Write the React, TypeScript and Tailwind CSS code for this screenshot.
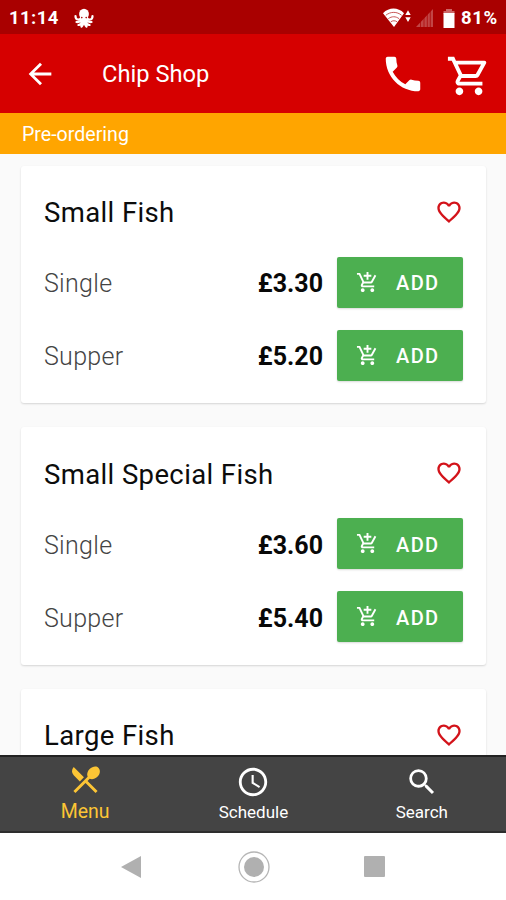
import {
  MdAccessTime,
  MdAddShoppingCart,
  MdArrowBack,
  MdFavoriteBorder,
  MdOutlineShoppingCart,
  MdPhone,
  MdRestaurantMenu,
  MdSearch,
} from "react-icons/md";

const items = [
  {
    name: "Small Fish",
    options: [
      { label: "Single", price: "£3.30" },
      { label: "Supper", price: "£5.20" },
    ],
  },
  {
    name: "Small Special Fish",
    options: [
      { label: "Single", price: "£3.60" },
      { label: "Supper", price: "£5.40" },
    ],
  },
  { name: "Large Fish", options: [] },
];

function Octopus() {
  return (
    <svg viewBox="0 0 20 20" className="ml-[14px] h-[20px] w-[20px]" fill="none">
      <path
        d="M7 10 Q6 12 3.5 11.5 Q1.5 11 1.5 8 M7.5 12 Q6 14.5 2.5 14 M8.5 13 Q8 16.5 4.5 17 M9.5 13 Q9.5 17 7.5 18.5 M13 10 Q14 12 16.5 11.5 Q18.5 11 18.5 8 M12.5 12 Q14 14.5 17.5 14 M11.5 13 Q12 16.5 15.5 17 M10.5 13 Q10.5 17 12.5 18.5"
        stroke="#fff"
        strokeWidth="2.2"
        strokeLinecap="round"
      />
      <ellipse cx="10" cy="6" rx="4.9" ry="5.3" fill="#fff" />
      <path d="M6.3 8h7.4l-.4 7.5H6.7z" fill="#fff" />
      <circle cx="7.8" cy="9.6" r="0.8" fill="#a90000" />
      <circle cx="12.2" cy="9.6" r="0.8" fill="#a90000" />
    </svg>
  );
}

function StatusBar() {
  return (
    <div className="flex h-[34px] items-center bg-[#a90000] pt-[2px] pr-[7px] pl-[9px] text-[18.5px] font-bold text-white">
      <span className="mt-px w-[51px] whitespace-nowrap tracking-[0.4px]">11:14</span>
      <Octopus />
      <svg viewBox="0 0 28 20" className="ml-auto h-[20px] w-[28px]">
        <path d="M0 5.2C6-1 15-1 21 5.2L11 19z" fill="#fff" />
        <path
          d="M2.8 7.3C7.5 3.4 14 3.4 18.6 7.3M5.3 10.7c3.4-2.6 7.4-2.6 10.8 0M7.8 13.8c2-1.4 4.3-1.4 6.2 0"
          stroke="#c24545"
          strokeWidth="0.9"
          fill="none"
        />
        <path d="M22.3 7 25 2.2 27.7 7zM22.3 9.2h5.4L25 14z" fill="#fff" />
      </svg>
      <svg viewBox="0 0 17 18" className="ml-[5px] h-[18px] w-[17px]">
        <path d="M0 18 17 0v18z" fill="#c24545" />
        <path d="M4.5 12v6M8 8v10M11.3 5v13M14.3 2v16" stroke="#a90000" strokeWidth="0.7" />
      </svg>
      <svg viewBox="0 0 12 19" className="ml-[10px] h-[19px] w-[12px]">
        <path d="M3 0h6v2h2.5v3H.5V2H3z" fill="#cd6666" />
        <path d="M.5 4h11v15H.5z" fill="#fff" />
      </svg>
      <span className="mt-px ml-[6px] w-[38px] whitespace-nowrap tracking-[0.6px]">81%</span>
    </div>
  );
}

function Header() {
  return (
    <header className="flex h-[79px] items-center bg-[#d60000] pr-[14px] pl-[23px] text-white">
      <MdArrowBack size={34} />
      <h1 className="mt-[3px] ml-[45px] text-[23.7px]">Chip Shop</h1>
      <MdPhone size={46} className="mt-px ml-auto" />
      <MdOutlineShoppingCart size={46} className="mt-[5px] ml-[20px]" />
    </header>
  );
}

function ItemCard({ item }: { item: (typeof items)[number] }) {
  return (
    <div className="h-[237.5px] shrink-0 rounded-[3px] bg-white pt-[3px] pr-[23px] pl-[23px] shadow-[0_1px_2px_rgba(0,0,0,0.15)]">
      <div className="flex h-[88px] items-center justify-between">
        <h2 className="mt-px text-[27.5px] tracking-[0.38px] text-[#0c0c0c]">{item.name}</h2>
        <MdFavoriteBorder size={28} className="-mt-[2px] text-[#d3131a]" />
      </div>
      <div className="flex flex-col gap-[22px]">
        {item.options.map((o) => (
          <div className="flex h-[51px] items-center" key={o.label}>
            <span className="pt-[4px] text-[25px] font-light tracking-[0.3px] text-[#444]">
              {o.label}
            </span>
            <span className="mr-[14px] ml-auto pt-[4px] text-[25px] font-bold text-[#080808]">
              {o.price}
            </span>
            <button className="flex h-[51px] w-[126px] items-center rounded-[2px] bg-[#4caf50] pl-[19px] text-[20px] font-medium tracking-[1.4px] text-white shadow-[0_1px_2px_rgba(0,0,0,0.15)]">
              <MdAddShoppingCart size={23} />
              <span className="mt-[2px] ml-[17px]">ADD</span>
            </button>
          </div>
        ))}
      </div>
    </div>
  );
}

function TabBar() {
  return (
    <nav className="grid h-[78px] shrink-0 grid-cols-3 border-t-2 border-b-2 border-t-[#222] border-b-[#2d2d2d] bg-[#444] pl-px text-white">
      <div className="flex flex-col items-center pt-[5px] text-[#fcc535]">
        <MdRestaurantMenu size={35} />
        <span className="text-[19.5px] leading-[29px]">Menu</span>
      </div>
      <div className="flex flex-col items-center pt-[8px]">
        <MdAccessTime size={34} />
        <span className="text-[17px] leading-[26px]">Schedule</span>
      </div>
      <div className="flex flex-col items-center pt-[8px]">
        <MdSearch size={34} />
        <span className="text-[17px] leading-[26px]">Search</span>
      </div>
    </nav>
  );
}

function SystemNav() {
  return (
    <div className="flex h-[67px] shrink-0 items-center bg-white pl-[121px]">
      <svg viewBox="0 0 20 24" className="h-[24px] w-[20px]">
        <path d="M20 1v22L0 12z" fill="#b0b0b0" />
      </svg>
      <svg viewBox="0 0 32 32" className="ml-[97px] h-[32px] w-[32px]">
        <circle cx="16" cy="16" r="15" fill="none" stroke="#b5b5b5" strokeWidth="1.3" />
        <circle cx="16" cy="16" r="10" fill="#b0b0b0" />
      </svg>
      <div className="ml-[94px] h-[21px] w-[21px] rounded-[1px] bg-[#b0b0b0]" />
    </div>
  );
}

export default function App() {
  return (
    <div className="flex h-[900px] w-[506px] flex-col overflow-hidden bg-[#fafafa] font-[Roboto,sans-serif]">
      <StatusBar />
      <Header />
      <div className="flex h-[40.5px] items-center bg-[#ffa500] pt-[3px] pl-[22px] text-[19.6px] text-white">
        Pre-ordering
      </div>
      <main className="flex min-h-0 flex-1 flex-col gap-[24px] overflow-hidden pt-[12px] pr-[20px] pl-[21px]">
        {items.map((item) => (
          <ItemCard item={item} key={item.name} />
        ))}
      </main>
      <TabBar />
      <SystemNav />
    </div>
  );
}
